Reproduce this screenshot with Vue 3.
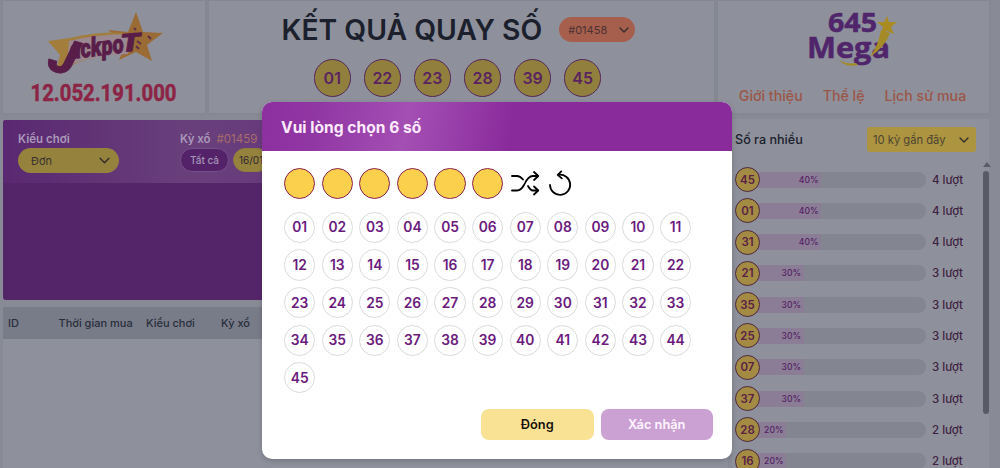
<template>
  <div class="page">
    <div class="row-top">
      <section class="card jackpot">
        <svg class="jackpot-logo" width="118" height="66" viewBox="0 0 118 66">
          <path d="M90 1 L97 21 L117 22 L101 34 L106 50 L90 41 L73 49 L79 34 L62 19 L82 21 Z" fill="#9b6b35" />
          <path d="M2 30 L24 27 Q55 20 84 22 L80 42 Q45 44 20 57 L10 60 L14 44 Z" fill="#a27d3c" />
          <path d="M23 30 Q50 23 86 23 L82 43 Q48 44 21 55 Z" fill="#9b8890" />
          <path d="M91 30 L95 33 M90 35 L93 38 M88 17 L90 19 M102 25 L105 28" stroke="#5b304c" stroke-width="2" />
          <g class="jackpot-word">
            <text transform="translate(0 58) rotate(16)" textLength="27" lengthAdjust="spacingAndGlyphs" font-size="49">J</text>
            <text transform="translate(25 48) rotate(-7)" textLength="54" lengthAdjust="spacingAndGlyphs" font-size="26">ackpo</text>
            <text transform="translate(75 41) rotate(-4)" textLength="20" lengthAdjust="spacingAndGlyphs" font-size="25">T</text>
          </g>
        </svg>
        <svg class="jackpot-amount" width="148" height="20" viewBox="0 0 148 20">
          <text x="0.5" y="18" textLength="146" lengthAdjust="spacingAndGlyphs">12.052.191.000</text>
        </svg>
      </section>

      <section class="card result">
        <div class="result-head">
          <h1>KẾT QUẢ QUAY SỐ</h1>
          <div class="draw-select">
            <span>#01458</span>
            <svg class="chevron" width="10" height="6" viewBox="0 0 10 6"><path d="M1 1 L5 5 L9 1" /></svg>
          </div>
        </div>
        <div class="result-balls">
          <span v-for="n in results" :key="n" class="result-ball">{{ n }}</span>
        </div>
      </section>

      <section class="card brand">
        <svg class="mega-logo" width="92" height="58" viewBox="0 0 92 58">
          <text x="20" y="20.5" textLength="49" lengthAdjust="spacingAndGlyphs" class="mega-num">645</text>
          <text x="-1" y="46.5" textLength="83" lengthAdjust="spacingAndGlyphs" class="mega-word">Mega</text>
          <path d="M31 49 Q40 54 48 52 L50 54 Q38 57 31 49 Z" fill="#a58b27" />
          <path d="M73 19 L82 22 Q77 36 62 46 Q70 35 73 19 Z" fill="#a58b27" />
          <path d="M79 5 L81 11 L89 11 L83 16 L86 23 L79 20 L73 23 L75 16 L69 11 L76 11 Z" fill="#a88b22" />
        </svg>
        <nav class="brand-nav">
          <a>Giới thiệu</a>
          <a>Thể lệ</a>
          <a>Lịch sử mua</a>
        </nav>
      </section>
    </div>

    <div class="row-main">
      <div class="left-col">
        <section class="bet">
          <div class="bet-filters">
            <div class="field">
              <label>Kiểu chơi</label>
              <div class="type-select">
                <span>Đơn</span>
                <svg class="chevron" width="11" height="7" viewBox="0 0 10 6"><path d="M1 1 L5 5 L9 1" /></svg>
              </div>
            </div>
            <div class="field">
              <label>Kỳ xổ <span class="draw-id">#01459</span></label>
              <div class="periods">
                <span class="period active">Tất cả</span>
                <span class="period">16/01</span>
              </div>
            </div>
          </div>
        </section>
        <section class="history">
          <div class="history-head">
            <span>ID</span>
            <span>Thời gian mua</span>
            <span>Kiểu chơi</span>
            <span>Kỳ xổ</span>
          </div>
        </section>
      </div>

      <aside class="stats">
        <div class="stats-head">
          <span>Số ra nhiều</span>
          <div class="range-select">
            <span>10 kỳ gần đây</span>
            <svg class="chevron" width="10" height="6" viewBox="0 0 10 6"><path d="M1 1 L5 5 L9 1" /></svg>
          </div>
        </div>
        <div class="stats-body">
          <div class="stats-list">
            <div v-for="s in stats" :key="s.num" class="stat">
              <span class="stat-ball">{{ s.num }}</span>
              <div class="stat-bar">
                <div class="stat-fill" :style="{ width: s.times * 10 + '%' }">{{ s.times * 10 }}%</div>
              </div>
              <span class="stat-times">{{ s.times }} lượt</span>
            </div>
          </div>
          <div class="scrollbar">
            <div class="scroll-up"></div>
            <div class="scroll-thumb"></div>
          </div>
        </div>
      </aside>
    </div>

    <div class="modal">
      <header class="modal-head">Vui lòng chọn 6 số</header>
      <div class="modal-body">
        <div class="picked">
          <span v-for="i in 6" :key="i" class="picked-ball">{{ selected[i - 1] }}</span>
          <button class="icon-btn shuffle" @click="pickRandom">
            <svg width="29" height="25" viewBox="0 0 29 25">
              <path d="M1 5 H6 Q9 5 12 8.5 M1 19.5 H6 Q10 19.5 13 14 Q17 5 22 5 H27 M17 15 Q19.5 19.5 22 19.5 H27 M23 1 L27.3 5 L23 9 M23 15.5 L27.3 19.5 L23 23.5" />
            </svg>
          </button>
          <button class="icon-btn reset" @click="selected = []">
            <svg width="23" height="26" viewBox="0 0 23 26">
              <path d="M1 15 A10.1 10.1 0 1 0 9.5 4.8 M12.3 1.4 L8.7 4.9 L12.8 8.4" />
            </svg>
          </button>
        </div>
        <div class="numbers">
          <button
            v-for="n in numbers"
            :key="n"
            class="number"
            :class="{ active: selected.includes(n) }"
            @click="toggle(n)"
          >
            {{ n }}
          </button>
        </div>
        <footer class="modal-foot">
          <button class="btn btn-close">Đóng</button>
          <button class="btn btn-confirm">Xác nhận</button>
        </footer>
      </div>
    </div>
  </div>
</template>

<script setup>
import { ref } from 'vue'

const results = ['01', '22', '23', '28', '39', '45']

const stats = [
  { num: '45', times: 4 },
  { num: '01', times: 4 },
  { num: '31', times: 4 },
  { num: '21', times: 3 },
  { num: '35', times: 3 },
  { num: '25', times: 3 },
  { num: '07', times: 3 },
  { num: '37', times: 3 },
  { num: '28', times: 2 },
  { num: '16', times: 2 }
]

const numbers = Array.from({ length: 45 }, (_, i) => String(i + 1).padStart(2, '0'))
const selected = ref([])

function toggle(n) {
  if (selected.value.includes(n)) {
    selected.value = selected.value.filter((v) => v !== n)
  } else if (selected.value.length < 6) {
    selected.value = [...selected.value, n].sort()
  }
}

function pickRandom() {
  const pool = [...numbers]
  const picks = []
  while (picks.length < 6) {
    picks.push(pool.splice(Math.floor(Math.random() * pool.length), 1)[0])
  }
  selected.value = picks.sort()
}
</script>

<style>
body {
  background: #888b95;
  overflow: hidden;
}
</style>

<style scoped>
.page {
  position: relative;
  height: 468px;
  overflow: hidden;
  box-sizing: border-box;
  padding: 1px 11px 0 3px;
  font-family: Inter, "Liberation Sans", sans-serif;
  color: #1b202c;
}

button {
  font-family: inherit;
  border: none;
  padding: 0;
  background: none;
  cursor: pointer;
}

svg {
  overflow: visible;
}

.card {
  background: #8e919b;
  box-shadow: 0 0 3px rgba(60, 64, 76, 0.12);
}

.chevron {
  fill: none;
  stroke: #342f2c;
  stroke-width: 1.4;
  stroke-linecap: round;
  stroke-linejoin: round;
}

.row-top {
  display: grid;
  grid-template-columns: 202px 505px 1fr;
  gap: 4px;
  height: 112px;
}

/* Jackpot */
.jackpot {
  display: flex;
  flex-direction: column;
  align-items: center;
}

.jackpot-logo {
  margin: 10px 0 0 2px;
}

.jackpot-word {
  font-family: Roboto, sans-serif;
  font-style: italic;
  font-weight: 900;
  fill: #581d49;
  stroke: #581d49;
  stroke-width: 0.8;
}

.jackpot-amount {
  margin-top: 6px;
}

.jackpot-amount text {
  font: bold 23px Roboto, sans-serif;
  fill: #8c2445;
  stroke: #8c2445;
  stroke-width: 0.5;
}

/* Result */
.result {
  display: flex;
  flex-direction: column;
}

.result-head {
  display: flex;
  align-items: center;
  gap: 17px;
  height: 57px;
  padding-left: 72.5px;
}

.result-head h1 {
  margin: 0;
  font-size: 28.3px;
  font-weight: 600;
  line-height: 34px;
  white-space: nowrap;
  color: #1b202c;
}

.draw-select {
  display: flex;
  align-items: center;
  justify-content: space-between;
  box-sizing: border-box;
  width: 76px;
  height: 25px;
  padding: 0 6px 0 9px;
  border-radius: 13px;
  background: #a55f4c;
  font-size: 11px;
  color: #4e3133;
}

.result-balls {
  display: flex;
  gap: 12.6px;
  margin-top: 1px;
  padding-left: 104.5px;
}

.result-ball {
  display: flex;
  align-items: center;
  justify-content: center;
  box-sizing: border-box;
  width: 37.5px;
  height: 37.5px;
  border: 1px solid #54265b;
  border-radius: 50%;
  background: #91803d;
  font-size: 16px;
  font-weight: 600;
  color: #5a2460;
}

/* Brand */
.brand {
  display: flex;
  flex-direction: column;
  align-items: center;
}

.mega-logo {
  margin: 10px 0 0 1px;
}

.mega-logo text {
  font-family: "Open Sans", "Noto Sans", sans-serif;
  font-weight: 700;
  fill: #50256b;
  stroke: #50256b;
  stroke-width: 0.5;
}

.mega-num {
  font-size: 26px;
}

.mega-word {
  font-size: 28px;
}

.brand-nav {
  display: flex;
  gap: 20px;
  margin: 18px 2px 0 0;
  font-size: 14.2px;
  font-weight: 500;
  line-height: 18px;
  white-space: nowrap;
  color: #9b5648;
}

/* Main */
.row-main {
  display: grid;
  grid-template-columns: 725px 1fr;
  gap: 4px;
  margin-top: 6px;
}

.bet {
  height: 180px;
  margin-top: 1px;
  border-radius: 3px;
  background: #55256a;
}

.bet-filters {
  display: flex;
  gap: 61px;
  box-sizing: border-box;
  height: 63px;
  padding: 11px 15px;
  border-radius: 3px 3px 0 0;
  background: linear-gradient(90deg, #5a2871, #683f7b 25%, #683c7c 35%, #5a2871);
}

.field label {
  display: block;
  font-size: 11.5px;
  font-weight: 600;
  line-height: 16px;
  color: #aa98b9;
}

.draw-id {
  margin-left: 3px;
  font-weight: 400;
  color: #a76d6a;
}

.type-select {
  display: flex;
  align-items: center;
  justify-content: space-between;
  box-sizing: border-box;
  width: 101px;
  height: 25px;
  margin-top: 1px;
  padding: 0 9px 0 13px;
  border-radius: 13px;
  background: #95833d;
  font-size: 11px;
  color: #3a3230;
}

.periods {
  display: flex;
  gap: 4px;
  margin-top: 1px;
}

.period {
  box-sizing: border-box;
  height: 24px;
  padding: 0 5px;
  border: 1px solid #8f7c3e;
  border-radius: 12px;
  background: #95833d;
  font-size: 10px;
  line-height: 22px;
  color: #2d2530;
}

.period.active {
  width: 49px;
  padding: 0;
  border-color: #76508a;
  background: #532269;
  font-weight: 500;
  text-align: center;
  color: #a795b8;
}

/* History */
.history {
  height: 170px;
  margin-top: 7px;
  background: #8e919b;
}

.history-head {
  display: grid;
  grid-template-columns: 50.5px 87.5px 75px 1fr;
  height: 32px;
  padding-left: 5px;
  background: #787c88;
  font-size: 11px;
  font-weight: 500;
  line-height: 33px;
  color: #292e3b;
}

/* Stats */
.stats {
  height: 360px;
  background: #8e919b;
}

.stats-head {
  display: flex;
  align-items: center;
  justify-content: space-between;
  height: 41px;
  padding: 0 13px 0 3px;
  font-size: 12.6px;
  font-weight: 500;
}

.range-select {
  display: flex;
  align-items: center;
  justify-content: space-between;
  box-sizing: border-box;
  width: 109px;
  height: 25px;
  padding: 0 7px 0 6px;
  border-radius: 3px;
  background: #ac9440;
  font-size: 11.2px;
  font-weight: 400;
  color: #4c4532;
}

.stats-body {
  display: flex;
  justify-content: space-between;
}

.stats-list {
  display: flex;
  flex-direction: column;
  gap: 6.3px;
  padding: 7px 0 0 3px;
}

.stat {
  display: flex;
  align-items: center;
}

.stat-ball {
  z-index: 1;
  display: flex;
  align-items: center;
  justify-content: center;
  box-sizing: border-box;
  width: 25px;
  height: 25px;
  border: 1px solid #4b273e;
  border-radius: 50%;
  background: #a48b44;
  font-size: 11.5px;
  font-weight: 600;
  color: #5a2143;
}

.stat-bar {
  width: 175px;
  height: 16px;
  margin-left: -9px;
  border-radius: 8px;
  background: #838690;
  overflow: hidden;
}

.stat-fill {
  box-sizing: border-box;
  height: 100%;
  padding-right: 2.5px;
  background: #8c7d97;
  font-size: 8.6px;
  font-weight: 500;
  line-height: 16px;
  text-align: right;
  color: #532263;
}

.stat-times {
  margin-left: 6px;
  font-size: 11.5px;
  font-weight: 500;
  color: #3e2142;
}

.scrollbar {
  width: 7px;
  margin-right: -1px;
  padding-top: 2px;
}

.scroll-up {
  width: 0;
  border-left: 4px solid transparent;
  border-right: 4px solid transparent;
  border-bottom: 5px solid #5b5d66;
}

.scroll-thumb {
  width: 6px;
  height: 243px;
  margin-top: 4px;
  border-radius: 3px;
  background: #585a65;
}

/* Modal */
.modal {
  position: absolute;
  top: 102px;
  left: 262px;
  width: 470px;
  height: 357px;
  border-radius: 10px;
  background: #fff;
  box-shadow: 0 2px 5px rgba(40, 42, 52, 0.25);
  overflow: hidden;
}

.modal-head {
  height: 49px;
  padding-left: 19px;
  background: linear-gradient(100deg, #8c2f9f 0%, #9137a4 12%, #a44fb4 31%, #9d46ae 37%, #8a2b9c 53%);
  font-size: 15.6px;
  font-weight: 700;
  line-height: 51px;
  color: #fdeafd;
}

.modal-body {
  padding: 16.5px 19px 0 22px;
}

.picked {
  display: flex;
  align-items: center;
  gap: 6.3px;
}

.picked-ball,
.number {
  display: flex;
  align-items: center;
  justify-content: center;
  box-sizing: border-box;
  width: 31.3px;
  height: 31.3px;
  border-radius: 50%;
  font-size: 13.8px;
  font-weight: 600;
  color: #6b1a7d;
}

.picked-ball {
  border: 1px solid #8b2252;
  background: #fad04c;
}

.icon-btn {
  display: flex;
  fill: none;
  stroke: #000;
  stroke-width: 1.8;
  stroke-linecap: round;
  stroke-linejoin: round;
}

.shuffle {
  margin-left: 1.5px;
}

.reset {
  margin-left: 2.5px;
}

.numbers {
  display: flex;
  flex-wrap: wrap;
  gap: 6.3px;
  margin-top: 13px;
}

.number {
  border: 1px solid #d8dcd9;
}

.number.active {
  border-color: #8b2252;
  background: #fad04c;
}

.modal-foot {
  display: flex;
  justify-content: flex-end;
  gap: 7px;
  margin-top: 15.5px;
}

.btn {
  width: 112.5px;
  height: 31px;
  border-radius: 8px;
  font-size: 12.8px;
  font-weight: 600;
}

.btn-close {
  background: #fae294;
  color: #17110a;
}

.btn-confirm {
  background: #cba1d3;
  color: #fdf5fe;
}
</style>
